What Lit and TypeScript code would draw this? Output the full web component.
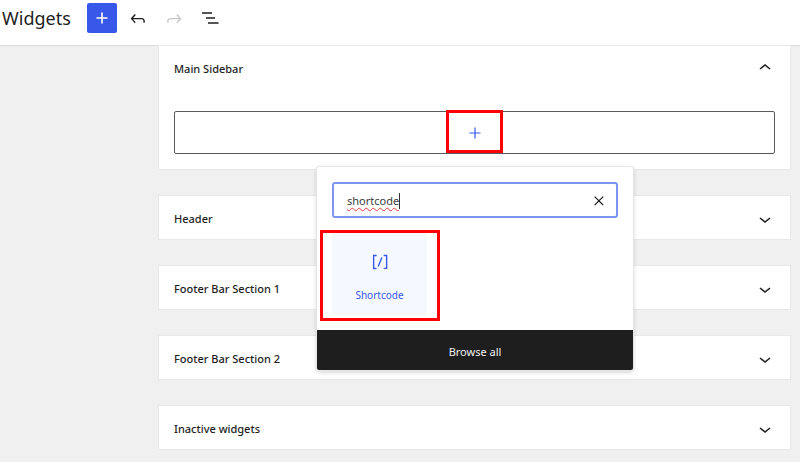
import { LitElement, html, css, svg } from "lit";
import { customElement } from "lit/decorators.js";

const chevron = (up: boolean) => html`<svg class="chev" width="24" height="24" viewBox="0 0 24 24"><path fill="none" stroke="currentColor" stroke-width="1.6" d="${up ? "M7 13l5-4 5 4" : "M7 11l5 4 5-4"}"/></svg>`;

@customElement("app-root")
export class AppRoot extends LitElement {
  static styles = css`
    :host { display: block; width: 800px; height: 462px; overflow: hidden; position: relative; background: #f0f0f0; font-family: "Noto Sans", "Open Sans", sans-serif; color: #1e1e1e; }
    .top { height: 46px; box-sizing: border-box; background: #fff; border-bottom: 1px solid #dcdcdc; display: flex; align-items: flex-start; padding: 3px 0 0 2px; }
    h1 { font-size: 18px; font-weight: 400; margin: 0; line-height: 30px; width: 85px; color: #1e1e1e; }
    .add { width: 30px; height: 30px; border-radius: 2px; background: #3858e9; display: flex; align-items: center; justify-content: center; }
    .tool { width: 22px; height: 22px; display: block; margin-top: 5px; }
    .undo { margin-left: 10px; }
    .redo { margin-left: 14px; }
    .list { margin-left: 13px; }
    .col { width: 631px; margin-left: 159px; display: flex; flex-direction: column; gap: 27px; }
    .panel { background: #fff; height: 43px; box-shadow: 0 0 0 1px #e8e8e8; display: flex; align-items: center; justify-content: space-between; padding: 2px 13px 0 15px; box-sizing: border-box; font-size: 11px; font-weight: 500; color: #1e1e1e; }
    .panel.open { height: 123px; display: block; padding: 0 15px; }
    .ph { height: 44px; display: flex; align-items: center; justify-content: space-between; margin-right: -2px; }
    .chev { display: block; color: #1e1e1e; }
    .slot { margin-top: 21px; height: 43px; box-sizing: border-box; border: 1px solid #5a5a5a; border-radius: 2px; display: flex; align-items: center; justify-content: center; }
    .pop { position: absolute; left: 317px; top: 167px; width: 316px; height: 203px; background: #fff; box-shadow: 0 0 0 1px #e6e6e6, 0 2px 5px rgba(0,0,0,.2); border-radius: 2px; display: flex; flex-direction: column; }
    .search { margin: 15px 15px 0; height: 36px; box-sizing: border-box; border: 2px solid #7e94f0; border-radius: 3px; display: flex; align-items: center; justify-content: space-between; padding: 1px 8px 0 13px; font-size: 11px; color: #3c3c3c; }
    .word { text-decoration: underline wavy #e04040 1px; text-underline-offset: 2px; border-right: 1px solid #333; line-height: 16px; }
    .results { flex: 1; padding: 15px 15px 0; }
    .item { width: 95px; height: 82px; background: #f6f8ff; display: flex; flex-direction: column; align-items: center; color: #3858e9; font-size: 10px; box-sizing: border-box; padding-top: 18px; }
    .item svg { display: block; margin-bottom: 15px; }
    .browse { height: 40px; padding-top: 3px; box-sizing: border-box; background: #1e1e1e; color: #f0f0f0; font-size: 11px; display: flex; align-items: center; justify-content: center; border-radius: 0 0 2px 2px; }
    .mark { position: absolute; border: 3px solid #f00; box-sizing: border-box; pointer-events: none; }
    .mark.a { left: 446px; top: 110px; width: 57px; height: 43px; }
    .mark.b { left: 320px; top: 230px; width: 120px; height: 91px; }
  `;

  render() {
    const panels = ["Header", "Footer Bar Section 1", "Footer Bar Section 2", "Inactive widgets"];
    return html`
      <div class="top">
        <h1>Widgets</h1>
        <div class="add"><svg width="24" height="24" viewBox="0 0 24 24"><path fill="#fff" d="M11.200 6.500h1.600v4.700h4.700v1.600h-4.700v4.700h-1.600v-4.700H6.500v-1.600h4.700z"/></svg></div>
        <svg class="tool undo" viewBox="0 0 24 24"><path fill="#1e1e1e" d="M18.300 11.700c-.6-.6-1.400-.9-2.300-.9H6.700l2.900-3.300-1.100-1-4.500 5L8.500 16.500l1-1-3-3.200H16c.5 0 .9.200 1.300.5.400.4.600.9.600 1.500v1.700h1.500v-1.700c0-1-.4-1.900-1.100-2.600z"/></svg>
        <svg class="tool redo" viewBox="0 0 24 24"><path fill="#c8c8c8" d="M15.600 6.500l-1.100 1 2.900 3.300H8c-.9 0-1.700.3-2.300.9-.7.700-1.100 1.600-1.100 2.600v1.700h1.500v-1.700c0-.6.200-1.100.6-1.500.4-.3.800-.5 1.300-.5h9.200L14.500 15.500l1.100 1.100 4.500-5z"/></svg>
        <svg class="tool list" viewBox="0 0 22 22"><path fill="#1e1e1e" d="M4 4.300h10v1.500H4zM8 9.300h9v1.500H8zM10 14.300h10.600v1.500H10z"/></svg>
      </div>
      <div class="col">
        <div class="panel open">
          <div class="ph"><span>Main Sidebar</span>${chevron(true)}</div>
          <div class="slot"><svg width="24" height="24" viewBox="0 0 24 24"><path fill="#3858e9" d="M11.400 6.500h1.200v4.900h4.900v1.200h-4.900v4.900h-1.200v-4.900H6.500v-1.200h4.900z"/></svg></div>
        </div>
        ${panels.map((p) => html`<div class="panel"><span>${p}</span>${chevron(false)}</div>`)}
      </div>
      <div class="pop">
        <div class="search">
          <span class="word">shortcode</span>
          <svg width="18" height="18" viewBox="0 0 24 24"><path fill="#1e1e1e" d="M13 11.800l5.200-5.200-1.100-1.100-5.200 5.200-5.200-5.200-1.100 1.100 5.200 5.200-5.200 5.200 1.100 1.100 5.200-5.200 5.200 5.200 1.100-1.100z"/></svg>
        </div>
        <div class="results">
          <div class="item">
            <svg width="22" height="22" viewBox="0 0 24 24">${svg`<path fill="#3858e9" d="M16 4.200v1.500h2.500v12.500H16v1.500h4V4.200h-4zM4.200 19.800h4v-1.500H5.800V5.800h2.500V4.200h-4v15.500zm5.100-3.100l1.400.6 4-10-1.400-.6-4 10z"/>`}</svg>
            <span>Shortcode</span>
          </div>
        </div>
        <div class="browse">Browse all</div>
      </div>
      <div class="mark a"></div>
      <div class="mark b"></div>
    `;
  }
}
